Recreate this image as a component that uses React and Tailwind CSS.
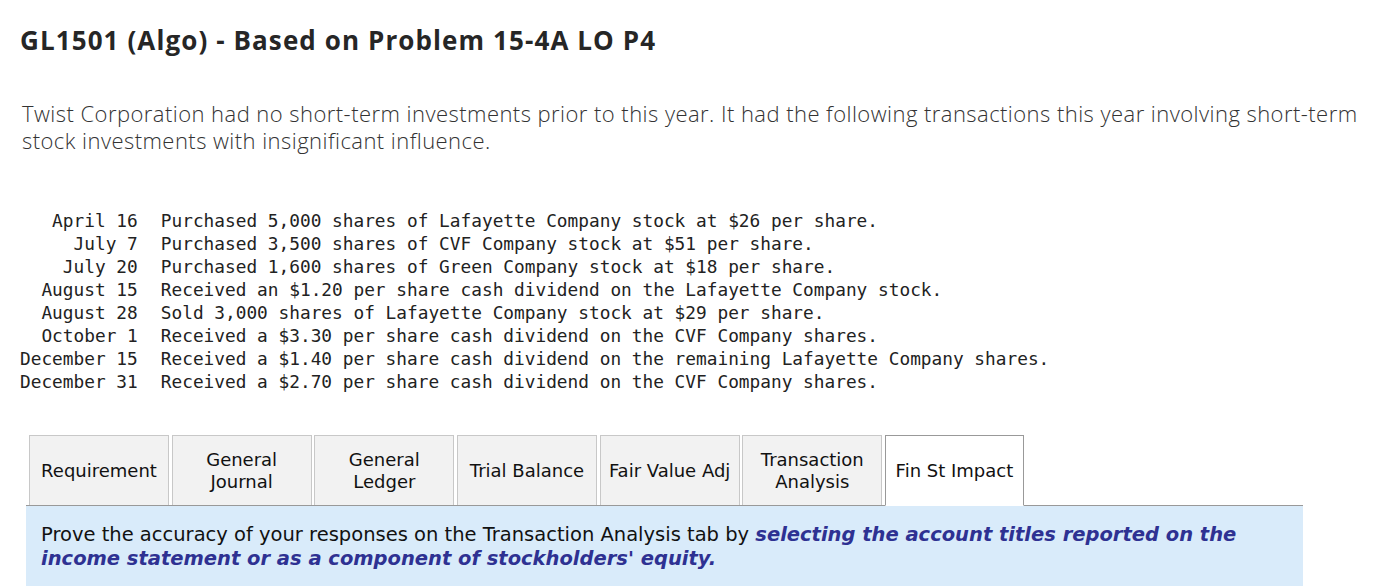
import React from "react";

const rows = [
  ["April 16", "Purchased 5,000 shares of Lafayette Company stock at $26 per share."],
  ["July 7", "Purchased 3,500 shares of CVF Company stock at $51 per share."],
  ["July 20", "Purchased 1,600 shares of Green Company stock at $18 per share."],
  ["August 15", "Received an $1.20 per share cash dividend on the Lafayette Company stock."],
  ["August 28", "Sold 3,000 shares of Lafayette Company stock at $29 per share."],
  ["October 1", "Received a $3.30 per share cash dividend on the CVF Company shares."],
  ["December 15", "Received a $1.40 per share cash dividend on the remaining Lafayette Company shares."],
  ["December 31", "Received a $2.70 per share cash dividend on the CVF Company shares."],
];

const tabs = [
  ["Requirement"],
  ["General", "Journal"],
  ["General", "Ledger"],
  ["Trial Balance"],
  ["Fair Value Adj"],
  ["Transaction", "Analysis"],
  ["Fin St Impact"],
];

export default function App() {
  return (
    <div className="w-[1380px] h-[588px] bg-white overflow-hidden text-[#222]">
      <h1 className="pl-[20px] pt-[24px] text-[26px] leading-[32px] font-bold tracking-[1.1px] text-[#262626] [font-family:'Open_Sans',Lato,sans-serif]">
        GL1501 (Algo) - Based on Problem 15-4A LO P4
      </h1>

      <p className="pl-[22px] pr-[10px] mt-[44px] text-[22px] leading-[27px] tracking-[0.45px] text-[#333] [font-family:'Open_Sans',sans-serif] font-light whitespace-nowrap">
        Twist Corporation had no short-term investments prior to this year. It had the following transactions this year involving short-term
        <br />
        stock investments with insignificant influence.
      </p>

      <div className="mt-[55px] pl-[20px] grid grid-cols-[auto_auto] justify-start gap-x-[23px] text-[17.8px] leading-[23px] text-[#222] [font-family:'DejaVu_Sans_Mono',monospace] whitespace-pre">
        {rows.map(([d, t]) => (
          <React.Fragment key={d}>
            <div className="text-right">{d}</div>
            <div>{t}</div>
          </React.Fragment>
        ))}
      </div>

      <div className="mt-[42px] ml-[26px] w-[1277px] [font-family:'DejaVu_Sans',Verdana,sans-serif]">
        <div className="flex items-end gap-[2.67px] pl-[3px] border-b border-[#999]">
          {tabs.map((lines, i) => {
            const active = i === tabs.length - 1;
            return (
              <div
                key={i}
                className={
                  active
                    ? "w-[139px] h-[71px] -mb-px bg-white border border-[#999] border-b-white flex flex-col items-center justify-center text-[18px] leading-[22px] text-[#111]"
                    : "w-[140px] h-[70px] bg-[#f2f2f2] border border-b-0 border-[#c8c8c8] flex flex-col items-center justify-center text-[18px] leading-[22px] text-[#111]"
                }
              >
                {lines.map((l) => (
                  <span key={l}>{l}</span>
                ))}
              </div>
            );
          })}
        </div>
        <div className="h-[80px] bg-[#d9ebfa] px-[15px] pt-[17px] text-[19.5px] leading-[24px] text-[#111]">
          Prove the accuracy of your responses on the Transaction Analysis tab by{" "}
          <b className="italic text-[#2e3192]">
            selecting the account titles reported on the income statement or as a component of stockholders' equity.
          </b>
        </div>
      </div>
    </div>
  );
}
